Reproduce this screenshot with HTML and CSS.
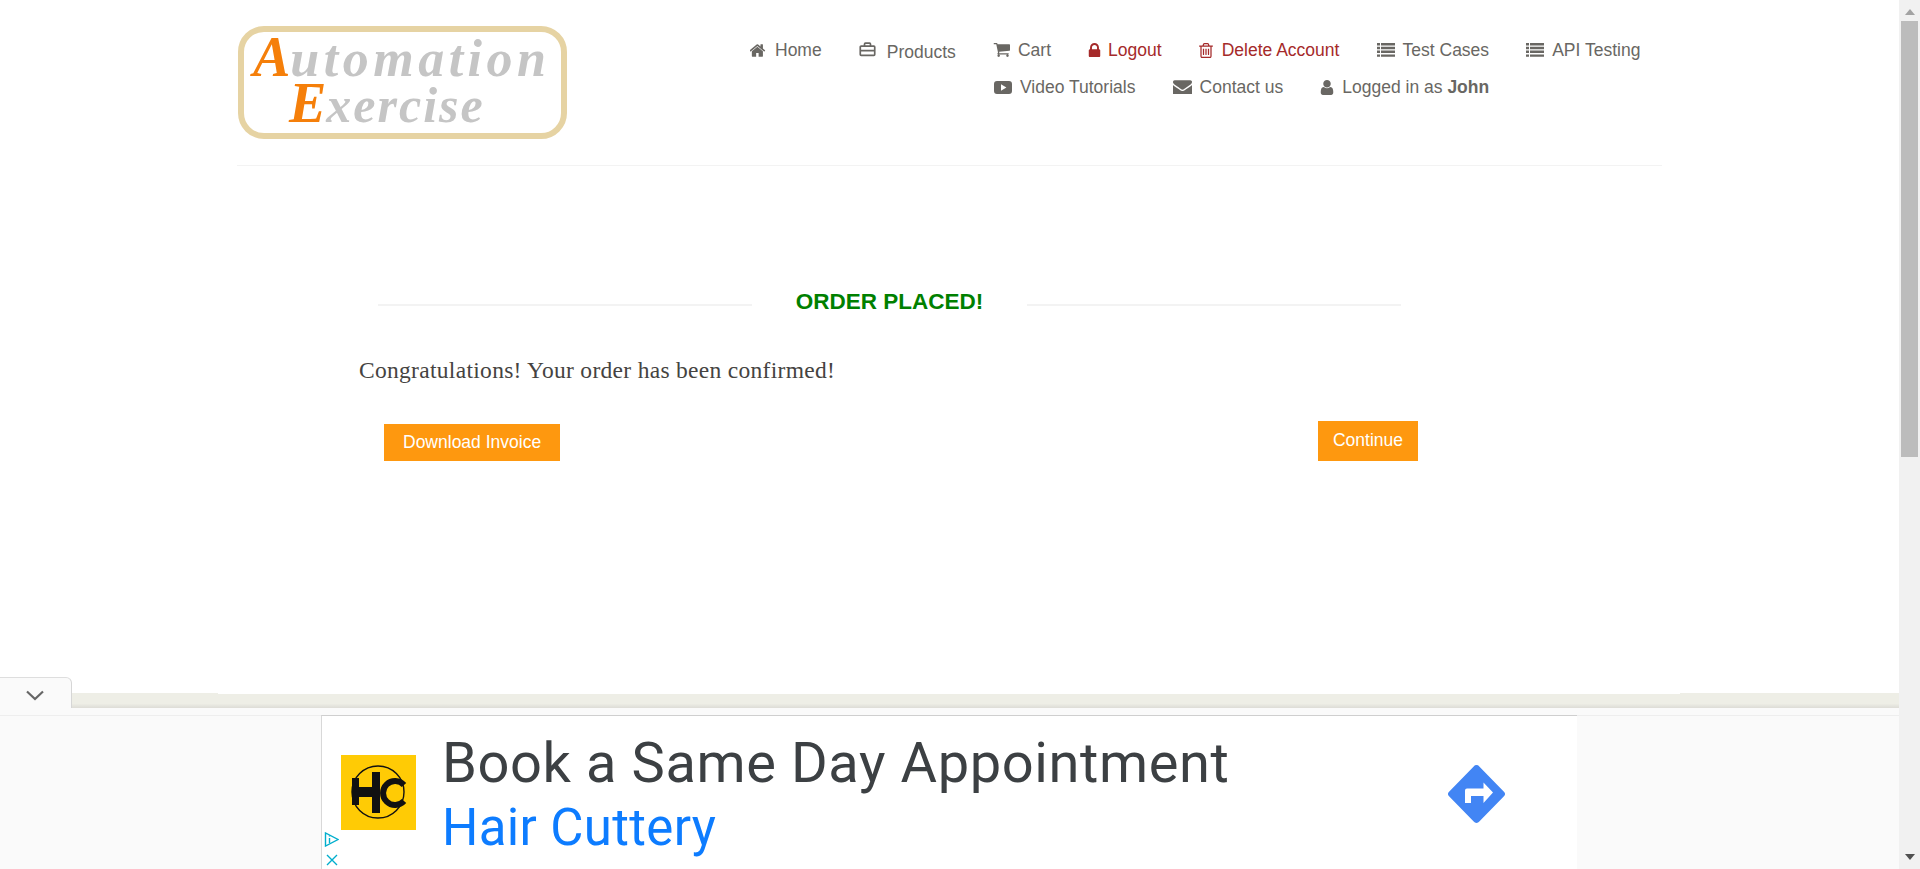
FILE: index.html
```html
<!DOCTYPE html>
<html>
<head>
    <title>Automation Exercise - Order Placed</title>
    <link rel="stylesheet" href="styles.css">
</head>
<body>
    <div class="viewport">
        <div class="page">
            <header class="site-header">
                <a class="logo">
                    <span class="logo-line"><b>A</b>utomation</span>
                    <span class="logo-line logo-line-2"><b>E</b>xercise</span>
                </a>
                <nav class="main-nav">
                    <ul class="nav-row">
                        <li><svg class="icon icon-home" viewBox="64 256 1664 1280"><path d="M1408 992v480q0 26-19 45t-45 19h-384v-384h-256v384h-384q-26 0-45-19t-19-45v-480q0-1 .5-3t.5-3l575-474 575 474q1 2 1 6zm223-69l-62 74q-8 9-21 11h-3q-13 0-21-7l-692-577-692 577q-12 8-24 7-13-2-21-11l-62-74q-8-10-7-23.5t11-21.5l719-599q32-26 76-26t76 26l244 204v-195q0-14 9-23t23-9h192q14 0 23 9t9 23v408l219 182q10 8 11 21.5t-7 23.5z"/></svg>Home</li>
                        <li class="nav-products"><svg class="icon icon-case" viewBox="0 1 20 17"><path class="outline" d="M2.500 6h15a1 1 0 0 1 1 1v9a1 1 0 0 1-1 1h-15a1 1 0 0 1-1-1V7a1 1 0 0 1 1-1zM6.500 6V3.500a1 1 0 0 1 1-1h5a1 1 0 0 1 1 1V6M1.500 11.500h17"/></svg><span>Products</span></li>
                        <li><svg class="icon icon-cart" viewBox="0 256 1728 1408"><path d="M704 1536q0 52-38 90t-90 38-90-38-38-90 38-90 90-38 90 38 38 90zm896 0q0 52-38 90t-90 38-90-38-38-90 38-90 90-38 90 38 38 90zm128-1088v512q0 24-16.500 42.500t-40.500 21.500l-1044 122q13 60 13 70 0 16-24 64h920q26 0 45 19t19 45-19 45-45 19h-1024q-26 0-45-19t-19-45q0-11 8-31.500t16-36 21.500-40 15.500-29.500l-177-823h-204q-26 0-45-19t-19-45 19-45 45-19h256q16 0 28.500 6.500t19.500 15.500 13 24.500 8 26 5.500 29.500 4.500 26h1201q26 0 45 19t19 45z"/></svg>Cart</li>
                        <li class="nav-red"><svg class="icon icon-lock" viewBox="320 128 1152 1408"><path d="M640 768h512v-192q0-106-75-181t-181-75-181 75-75 181v192zm832 96v576q0 40-28 68t-68 28h-960q-40 0-68-28t-28-68v-576q0-40 28-68t68-28h32v-192q0-184 132-316t316-132 316 132 132 316v192h32q40 0 68 28t28 68z"/></svg>Logout</li>
                        <li class="nav-red"><svg class="icon icon-trash" viewBox="192 128 1408 1536"><path d="M704 736v576q0 14-9 23t-23 9h-64q-14 0-23-9t-9-23v-576q0-14 9-23t23-9h64q14 0 23 9t9 23zm256 0v576q0 14-9 23t-23 9h-64q-14 0-23-9t-9-23v-576q0-14 9-23t23-9h64q14 0 23 9t9 23zm256 0v576q0 14-9 23t-23 9h-64q-14 0-23-9t-9-23v-576q0-14 9-23t23-9h64q14 0 23 9t9 23zm128 724v-948h-896v948q0 22 7 40.500t14.500 27 10.500 8.500h832q3 0 10.500-8.500t14.500-27 7-40.500zm-672-1076h448l-48-117q-7-9-17-11h-317q-10 2-17 11zm928 32v64q0 14-9 23t-23 9h-96v948q0 83-47 143.500t-113 60.500h-832q-66 0-113-58.500t-47-141.500v-952h-96q-14 0-23-9t-9-23v-64q0-14 9-23t23-9h309l70-167q15-37 54-63t79-26h320q40 0 79 26t54 63l70 167h309q14 0 23 9t9 23z"/></svg>Delete Account</li>
                        <li><svg class="icon icon-list" viewBox="0 0 18 14"><path d="M0 0h3v2.400H0zM4 0h14v2.400H4zM0 3.800h3v2.400H0zM4 3.800h14v2.400H4zM0 7.600h3V10H0zM4 7.600h14V10H4zM0 11.400h3v2.400H0zM4 11.400h14v2.400H4z"/></svg>Test Cases</li>
                        <li><svg class="icon icon-list" viewBox="0 0 18 14"><path d="M0 0h3v2.400H0zM4 0h14v2.400H4zM0 3.800h3v2.400H0zM4 3.800h14v2.400H4zM0 7.600h3V10H0zM4 7.600h14V10H4zM0 11.400h3v2.400H0zM4 11.400h14v2.400H4z"/></svg>API Testing</li>
                    </ul>
                    <ul class="nav-row nav-row-second">
                        <li><svg class="icon icon-video" viewBox="0 0 18 13"><path fill-rule="evenodd" d="M3 0h12a3 3 0 0 1 3 3v7a3 3 0 0 1-3 3H3a3 3 0 0 1-3-3V3a3 3 0 0 1 3-3zM7 3.300v6.400l5.400-3.200z"/></svg>Video Tutorials</li>
                        <li><svg class="icon icon-mail" viewBox="0 256 1792 1280"><path d="M1792 710v794q0 66-47 113t-113 47h-1472q-66 0-113-47t-47-113v-794q44 49 101 87 362 246 497 345 57 42 92.500 65.500t94.500 48 110 24.500h2q51 0 110-24.500t94.500-48 92.500-65.500q170-123 498-345 57-39 100-87zm0-294q0 79-49 151t-122 123q-376 261-468 325-10 7-42.500 30.500t-54 38-52 32.500-57.500 27-50 9h-2q-23 0-50-9t-57.500-27-52-32.500-54-38-42.500-30.500q-91-64-262-182.500t-205-142.500q-62-42-117-115.500t-55-136.500q0-78 41.500-130t118.500-52h1472q65 0 112.500 47t47.500 113z"/></svg>Contact us</li>
                        <li><svg class="icon icon-user" viewBox="256 128 1280 1536"><path d="M1536 1399q0 109-62.500 187t-150.500 78h-854q-88 0-150.500-78t-62.500-187q0-85 8.500-160.500t31.500-152 58.500-131 94-89 134.500-34.500q131 128 313 128t313-128q76 0 134.500 34.500t94 89 58.500 131 31.500 152 8.500 160.500zm-256-887q0 159-112.500 271.500t-271.500 112.500-271.500-112.500-112.500-271.500 112.500-271.500 271.500-112.500 271.500 112.500 112.500 271.500z"/></svg><span>Logged in as <b>John</b></span></li>
                    </ul>
                </nav>
            </header>

            <section class="order-placed">
                <div class="title-row">
                    <span class="title-line"></span>
                    <h2>ORDER PLACED!</h2>
                    <span class="title-line"></span>
                </div>
                <p class="confirm-text">Congratulations! Your order has been confirmed!</p>
                <div class="button-row">
                    <a class="btn">Download Invoice</a>
                    <a class="btn btn-continue">Continue</a>
                </div>
            </section>
        </div>

        <div class="anchor-ad">
            <div class="anchor-top">
                <div class="anchor-tab">
                    <svg class="chevron" viewBox="0 0 18 10"><path d="M1 1l8 7.500L17 1"/></svg>
                </div>
                <div class="anchor-bar"></div>
            </div>
            <div class="anchor-body">
                <div class="ad">
                    <div class="ad-marks">
                        <svg class="ad-choice" viewBox="0 0 15 15"><path d="M1.500 1v13L14 7.500z"/><path d="M5.500 6v5M5.500 3.600v1"/></svg>
                        <svg class="ad-close" viewBox="0 0 12 12"><path d="M1 1l10 10M11 1L1 11"/></svg>
                    </div>
                    <div class="ad-logo">
                        <svg viewBox="0 0 75 75"><circle cx="37" cy="37" r="26" class="ring"/><path d="M11 23h7v9h13V17h8v41h-8V42H18v8h-7z"/><path class="hc-c" d="M63 30a12 12 0 1 0 0 16"/></svg>
                    </div>
                    <div class="ad-text">
                        <div class="ad-headline">Book a Same Day Appointment</div>
                        <div class="ad-brand">Hair Cuttery</div>
                    </div>
                    <svg class="ad-arrow" viewBox="0 0 57 58"><path class="diamond" d="M25.700 1.400a3.600 3.600 0 0 1 5.600 0l24.400 25a3.600 3.600 0 0 1 0 5.200l-24.400 25a3.600 3.600 0 0 1-5.600 0l-24.400-25a3.600 3.600 0 0 1 0-5.200z"/><path class="turn" d="M17 38V25.500a2 2 0 0 1 2-2h16.500V17.500L45 27.500l-9.500 10.500v-7H23v7z"/></svg>
                </div>
            </div>
        </div>
    </div>

    <div class="scrollbar">
        <svg class="scroll-arrow" viewBox="0 0 10 6"><path d="M5 0l5 6H0z"/></svg>
        <div class="scroll-thumb"></div>
        <svg class="scroll-arrow scroll-arrow-down" viewBox="0 0 10 6"><path d="M0 0h10L5 6z"/></svg>
    </div>
</body>
</html>
```

FILE: styles.css
```css
html, body {
    margin: 0;
    padding: 0;
    height: 869px;
    overflow: hidden;
}

body {
    display: flex;
    background: white;
    font-family: "Liberation Sans", Arial, sans-serif;
    color: #696763;
}

.viewport {
    flex: 1;
    min-width: 0;
    display: flex;
    flex-direction: column;
}

.page {
    flex: 1;
    width: 1425px;
    margin: 0 auto;
}

/* header */
.site-header {
    display: flex;
    height: 166px;
    box-sizing: border-box;
    border-bottom: 1px solid #f3f3f3;
}

.logo {
    width: 329px;
    height: 113px;
    box-sizing: border-box;
    margin: 26px 0 0 1px;
    padding: 3px 0 0 9px;
    border: 6px solid #e6d3a3;
    border-radius: 26px;
    font-family: "Liberation Serif", serif;
    font-style: italic;
    font-weight: bold;
    color: #c5c5c5;
    flex-shrink: 0;
}

.logo-line {
    display: block;
    height: 47px;
    font-size: 52px;
    line-height: 47px;
    letter-spacing: 4.5px;
    white-space: nowrap;
}

.logo-line-2 {
    padding-left: 36px;
    font-size: 50px;
    letter-spacing: 2px;
}

.logo b {
    color: #f57f0a;
    font-size: 56px;
    line-height: 0;
    letter-spacing: 0;
}

.main-nav {
    margin: 40px 0 0 183px;
}

.nav-row {
    display: flex;
    gap: 37.1px;
    margin: 0;
    padding: 0;
    list-style: none;
    height: 37px;
    font-size: 17.5px;
    line-height: 20px;
    white-space: nowrap;
}

.nav-row li {
    display: flex;
    align-items: center;
    height: 20px;
}

.nav-row-second {
    padding-left: 244px;
}

.nav-products span {
    margin-top: 4px;
}

.nav-red {
    color: #a52a2a;
}

.icon {
    flex-shrink: 0;
    margin-right: 8px;
    fill: currentColor;
}

.icon-home {
    width: 16px;
    height: 13px;
    margin-right: 9px;
}

.icon-case {
    width: 17px;
    height: 16px;
    margin-right: 11px;
    margin-bottom: 3px;
}

.icon-cart {
    width: 17px;
    height: 14px;
}

.icon-lock {
    width: 13px;
    height: 14px;
    margin-right: 7px;
}

.icon-trash {
    width: 14px;
    height: 15px;
    margin-right: 9px;
}

.icon-list {
    width: 18px;
    height: 14px;
}

.icon-video {
    width: 18px;
    height: 13px;
}

.icon-mail {
    width: 19px;
    height: 14px;
}

.icon-user {
    width: 14px;
    height: 15px;
}

.outline {
    fill: none;
    stroke: currentColor;
    stroke-width: 2;
}

/* order placed */
.order-placed {
    padding: 0 244px 0 122px;
}

.title-row {
    display: flex;
    align-items: center;
    gap: 44px;
    width: 1023px;
    margin: 124px 0 0 19px;
    height: 24px;
}

.title-line {
    flex: 1;
    height: 2px;
    margin-top: 6px;
    background: #f3f3f3;
}

.title-row h2 {
    margin: 0;
    font-size: 22.5px;
    line-height: 24px;
    color: green;
}

.confirm-text {
    margin: 42px 0 0;
    font-family: "Liberation Serif", serif;
    font-size: 23.5px;
    letter-spacing: 0.3px;
    line-height: 28px;
    color: #454341;
}

.button-row {
    display: flex;
    justify-content: space-between;
    align-items: flex-end;
    width: 1034px;
    margin: 37px 0 0 25px;
}

.btn {
    display: block;
    padding: 0 19px;
    height: 37px;
    line-height: 36px;
    background: #fe980f;
    color: white;
    font-size: 17.5px;
}

.btn-continue {
    height: 40px;
    line-height: 39px;
    padding: 0 15px;
}

/* anchor ad */
.anchor-ad {
    height: 192px;
    flex-shrink: 0;
    display: flex;
    flex-direction: column;
}

.anchor-top {
    display: flex;
    height: 39px;
    flex-shrink: 0;
    background: linear-gradient(transparent 31px, #fafafa 31px);
    border-bottom: 1px solid #eeeeee;
    box-sizing: border-box;
}

.anchor-tab {
    width: 72px;
    height: 31px;
    box-sizing: border-box;
    background: #fafafa;
    border-top: 1px solid #dedede;
    border-right: 1px solid #d6d6d6;
    border-radius: 0 6px 0 0;
    display: flex;
    justify-content: center;
    padding: 12px 2px 0 0;
}

.chevron {
    width: 18px;
    height: 11px;
    fill: none;
    stroke: #666;
    stroke-width: 2.2;
}

.anchor-bar {
    flex: 1;
    height: 15px;
    margin-top: 16px;
    background:
        linear-gradient(white, white) 146px 0 / 1462px 1px no-repeat,
        linear-gradient(#eeeee6 70%, #dddcd6);
}

.anchor-body {
    flex: 1;
    min-height: 0;
    background: #fafafa;
    display: flex;
    justify-content: center;
}

.ad {
    width: 1256px;
    box-sizing: border-box;
    background: white;
    border-left: 1px solid #d8d8d8;
    border-top: 1px solid #cfcfcf;
    margin: -1px 0 0 -1px;
    display: flex;
    padding-top: 39px;
}

.ad-marks {
    width: 19px;
    display: flex;
    flex-direction: column;
    align-items: center;
    padding-top: 77px;
    gap: 7px;
}

.ad-choice, .ad-close {
    fill: none;
    stroke: #00aecd;
    stroke-width: 1.4;
}

.ad-choice {
    width: 15px;
    height: 15px;
}

.ad-close {
    width: 12px;
    height: 12px;
}

.ad-logo {
    width: 75px;
    height: 75px;
    background: #ffcb05;
    flex-shrink: 0;
}

.ad-logo svg {
    display: block;
    fill: #111;
}

.ad-logo .ring {
    fill: none;
    stroke: #111;
    stroke-width: 1.4;
}

.ad-logo .hc-c {
    fill: none;
    stroke: #111;
    stroke-width: 6;
}

.ad-text {
    width: 1059px;
    flex-shrink: 0;
    padding-left: 26px;
    box-sizing: border-box;
    margin-top: -27px;
    font-family: Roboto, sans-serif;
}

.ad-headline {
    font-size: 56px;
    font-weight: 450;
    letter-spacing: 0.6px;
    line-height: 70px;
    color: #3c4043;
    white-space: nowrap;
}

.ad-brand {
    font-size: 51px;
    letter-spacing: 0.35px;
    line-height: 60px;
    color: #0d7cff;
    white-space: nowrap;
}

.ad-arrow {
    width: 57px;
    height: 58px;
    flex-shrink: 0;
    margin-top: 10px;
    margin-left: -27px;
}

.diamond {
    fill: #4285f4;
}

.turn {
    fill: white;
}

/* scrollbar */
.scrollbar {
    width: 21px;
    flex-shrink: 0;
    background: #f1f1f1;
    display: flex;
    flex-direction: column;
    align-items: center;
}

.scroll-arrow {
    width: 10px;
    height: 6px;
    margin-top: 9px;
    fill: #a3a3a3;
    flex-shrink: 0;
}

.scroll-arrow-down {
    margin-top: auto;
    margin-bottom: 9px;
    fill: #505050;
}

.scroll-thumb {
    width: 17px;
    height: 436px;
    margin-top: 6px;
    background: #bcbcbc;
}
```
